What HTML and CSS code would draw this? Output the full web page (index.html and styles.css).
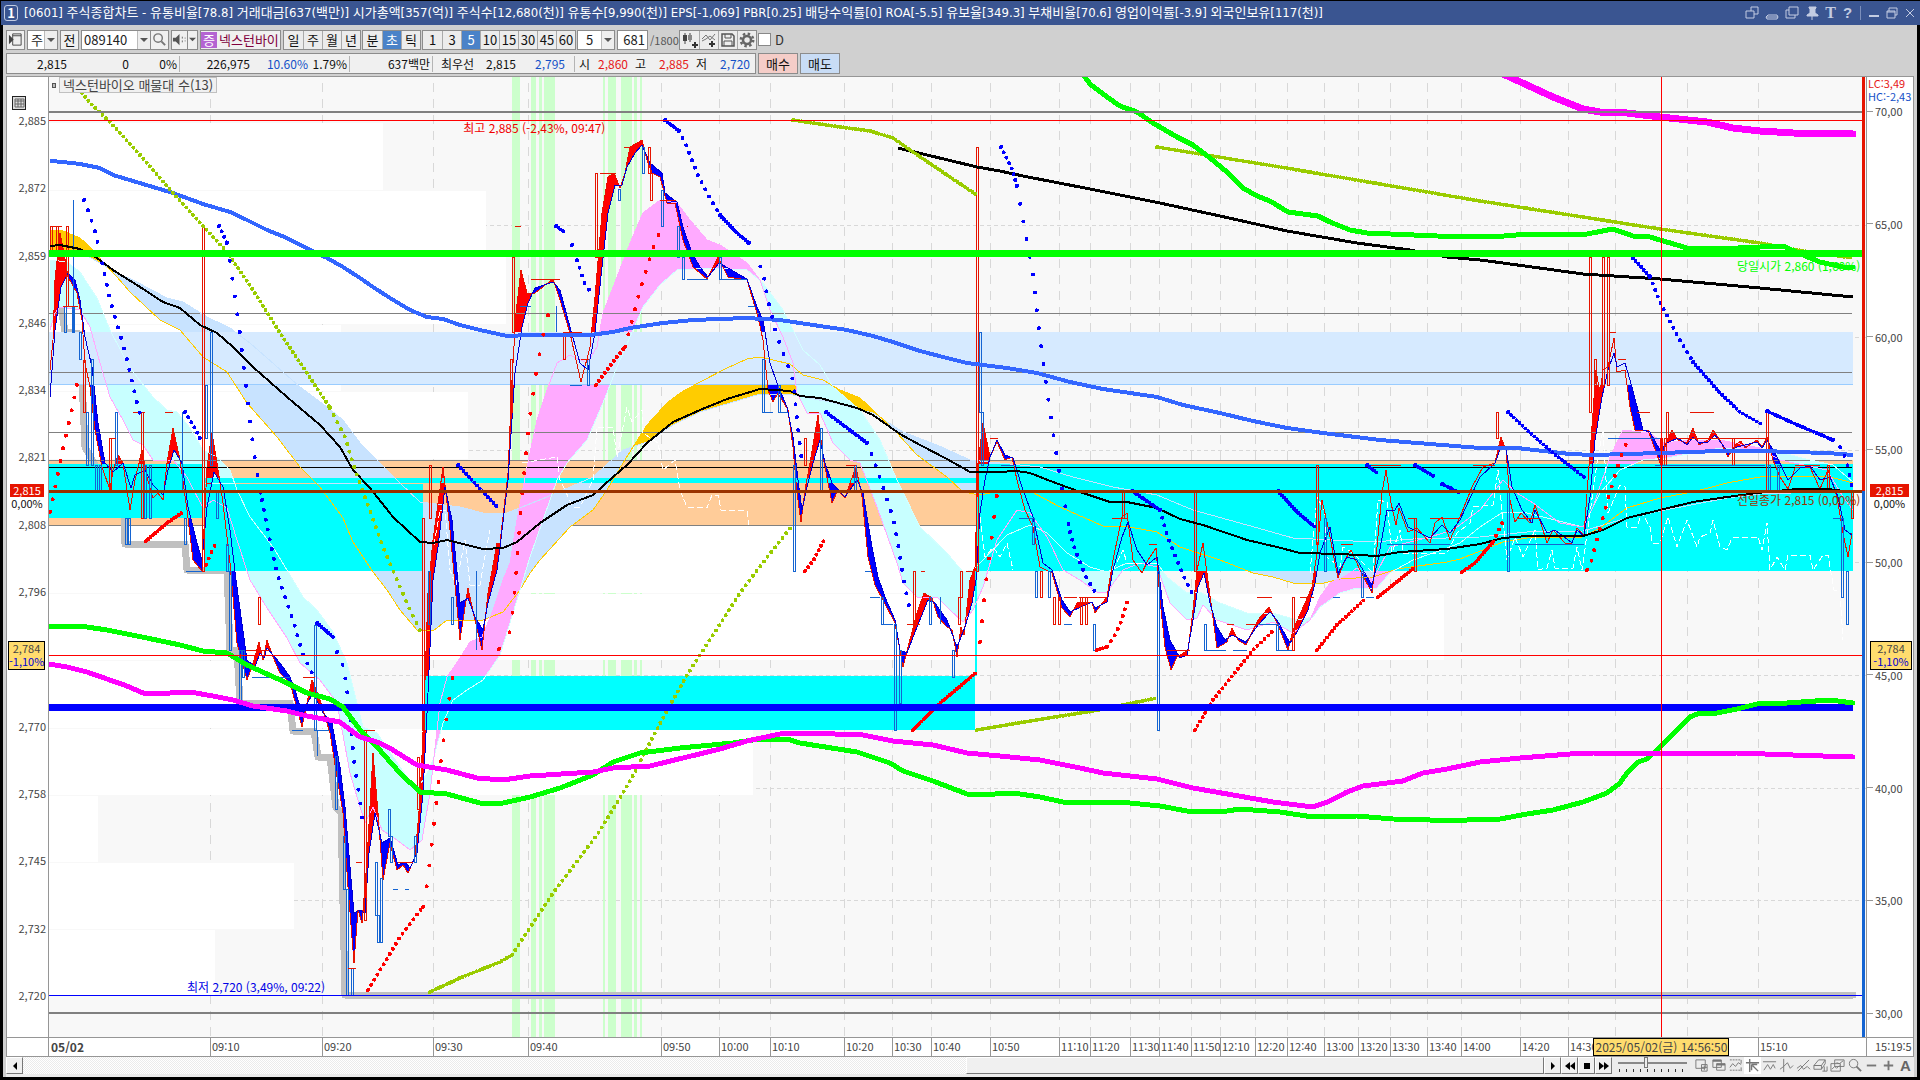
FILE: index.html
```html
<!DOCTYPE html>
<html lang="ko">
<head>
<meta charset="utf-8">
<title>[0601] 주식종합차트</title>
<link rel="stylesheet" href="styles.css">
</head>
<body>
<svg class="defs" aria-hidden="true">
  <symbol id="i-down" viewBox="0 0 8 8"><path d="M0 2h8L4 6z" fill="#555"/></symbol>
</svg>
<div class="window">
  <header class="titlebar">
    <span class="badge">1</span>
    <h1>[0601] 주식종합차트 - 유통비율[78.8] 거래대금[637(백만)] 시가총액[357(억)] 주식수[12,680(천)] 유통수[9,990(천)] EPS[-1,069] PBR[0.25] 배당수익률[0] ROA[-5.5] 유보율[349.3] 부채비율[70.6] 영업이익률[-3.9] 외국인보유[117(천)]</h1>
    <div class="win-buttons">
      <button aria-label="분리"><svg viewBox="0 0 14 14"><path d="M6 5V1h7v7H9M1 5h8v7H1z"/></svg></button>
      <button aria-label="내리기"><svg viewBox="0 0 14 14"><path d="M1 11h12M3 9h9l1 2-1 2H2l-1-2z" stroke-width="1"/></svg></button>
      <button aria-label="복제"><svg viewBox="0 0 14 14"><path d="M4 1h9v8H4zM4 4H1v8h9V9"/></svg></button>
      <button aria-label="고정"><svg viewBox="0 0 14 14"><path d="M4 1h7v1l-1 1v4l3 2v1H2V9l3-2V3L4 2z" fill="#c3cce2"/><path d="M7 9v5"/></svg></button>
      <button aria-label="글꼴" class="serif">T</button>
      <button aria-label="도움말" class="help">?</button>
      <span class="bar"></span>
      <button class="sys" aria-label="최소화"><svg viewBox="0 0 14 14"><path d="M2 10h10" stroke-width="2"/></svg></button>
      <button class="sys" aria-label="복원"><svg viewBox="0 0 14 14"><path d="M4 5V2h8v7h-2M2 5h8v7H2zM2 6h8"/></svg></button>
      <button class="sys" aria-label="닫기"><svg viewBox="0 0 14 14"><path d="M3 3l8 8M11 3l-8 8"/></svg></button>
    </div>
  </header>

  <div class="toolbar">
    <button class="tb w19" aria-label="패널"><svg viewBox="0 0 16 16"><path d="M5 2h9v12H5zM5 4h9" stroke="#444" fill="#eee"/><path d="M1 3v10l5-5z" fill="#444"/></svg></button>
    <label class="combo w31"><select aria-label="종목 구분"><option>주</option></select><span class="arrow"><svg><use href="#i-down"/></svg></span></label>
    <button class="tb w19">전</button>
    <label class="combo w70"><input type="text" value="089140" aria-label="종목코드"><span class="arrow"><svg><use href="#i-down"/></svg></span></label>
    <button class="tb w19 join" aria-label="검색"><svg viewBox="0 0 16 16"><circle cx="6.500" cy="6.500" r="4.500" fill="none" stroke="#777" stroke-width="1.500"/><path d="M10 10l4 4" stroke="#777" stroke-width="2"/></svg></button>
    <button class="tb w17" aria-label="소리"><svg viewBox="0 0 16 16"><path d="M1 6h3l4-4v12l-4-4H1z" fill="#555"/><path d="M11 5v2M11 9v2M14 6v1M14 9v1" stroke="#666"/></svg></button>
    <button class="tb w11 join" aria-label="소리 설정"><svg class="tiny"><use href="#i-down"/></svg></button>
    <div class="stock"><span>증</span>넥스턴바이</div>
    <div class="group"><button>일</button><button>주</button><button>월</button><button>년</button></div>
    <div class="group"><button>분</button><button class="on">초</button><button>틱</button></div>
    <div class="group"><button>1</button><button>3</button><button class="on">5</button><button>10</button><button>15</button><button>30</button><button>45</button><button>60</button></div>
    <label class="combo w38 center"><select aria-label="주기"><option>5</option></select><span class="arrow"><svg><use href="#i-down"/></svg></span></label>
    <label class="combo w31"><input class="right" type="text" value="681" aria-label="조회 봉수"></label>
    <span class="total">/1800</span>
    <div class="group icons">
      <button aria-label="차트 추가"><svg viewBox="0 0 16 16"><path d="M3 1v11M8 1v9" stroke="#444"/><path d="M1 3h4v6H1z" fill="#444"/><path d="M6 3h4v5H6z" fill="#888"/><path d="M13 10v6M10 13h6" stroke="#333" stroke-width="2"/></svg></button>
      <button aria-label="지표 추가"><svg viewBox="0 0 16 16"><path d="M1 7l4-4 4 5 5-6M1 9l4-2 4-3 5 4" stroke="#777" fill="none"/><path d="M11 9v6M8 12h6" stroke="#333" stroke-width="2"/></svg></button>
      <button aria-label="저장"><svg viewBox="0 0 16 16"><path d="M2 2h10l2 2v10H2z" stroke="#555" fill="#eee" stroke-width="1.500"/><path d="M5 2v4h6V2M4 14V9h8v5" stroke="#555" fill="none"/></svg></button>
      <button aria-label="설정"><svg viewBox="0 0 16 16"><circle cx="8" cy="8" r="4" fill="none" stroke="#666" stroke-width="2.500"/><circle cx="8" cy="8" r="6.200" fill="none" stroke="#666" stroke-width="2.500" stroke-dasharray="2.430 2.430"/></svg></button>
    </div>
    <label class="check"><input type="checkbox">D</label>
  </div>

  <div class="quote">
    <div class="prices">
      <span>2,815</span><span>0</span><span class="cell">0%</span>
      <span>226,975</span><span class="blue">10.60%</span><span class="cell">1.79%</span>
      <span class="cell">637백만</span>
      <span>최우선</span><span>2,815</span><span class="blue cell far">2,795</span>
      <span>시</span><span class="red">2,860</span><span>고</span><span class="red">2,885</span><span>저</span><span class="blue">2,720</span>
    </div>
    <button class="order buy">매수</button>
    <button class="order sell">매도</button>
  </div>

  <main class="chart">
    <div class="axis left">
      <svg class="sheet" viewBox="0 0 14 14"><path d="M0 0h14v14H0z" fill="#222"/><path d="M1 1h12v12H1z" fill="#ddd"/><path d="M3 3h9v8H3zM3 5h9M3 8h9M6 3v8M9 3v8" stroke="#666" fill="none"/></svg>
      <ol class="scale">
        <li>2,885</li><li>2,872</li><li>2,859</li><li>2,846</li><li>2,834</li><li>2,821</li><li>2,808</li><li>2,796</li><li>&nbsp;</li><li>2,770</li><li>2,758</li><li>2,745</li><li>2,732</li><li>2,720</li>
      </ol>
      <div class="now"><b>2,815</b><span>0,00%</span></div>
      <div class="cursor-price">2,784<span>-1,10%</span></div>
    </div>
    <div class="plot">
      <svg id="plot" viewBox="49 77 1817 960" preserveAspectRatio="none" role="img" aria-label="넥스턴바이오 가격 차트"></svg>
      <span class="series"><i></i><span>넥스턴바이오 매물대 수(13)</span></span>
      <span class="note high">최고 2,885 (-2,43%, 09:47)</span>
      <span class="note low">최저 2,720 (3,49%, 09:22)</span>
      <span class="note open">당일시가 2,860 (1,60%)</span>
      <span class="note close">전일종가 2,815 (0,00%)</span>
    </div>
    <div class="axis right-axis">
      <div class="extremes"><span class="red">LC:3,49</span><span class="blue">HC:-2,43</span></div>
      <ol class="scale">
        <li>70,00</li><li>65,00</li><li>60,00</li><li>55,00</li><li>50,00</li><li>45,00</li><li>40,00</li><li>35,00</li><li>30,00</li>
      </ol>
      <div class="now"><b>2,815</b><span>0,00%</span></div>
      <div class="cursor-price">2,784<span>-1,10%</span></div>
    </div>
    <div class="corner"></div>
    <div class="times">
      <span class="date">05/02</span><span>09:10</span><span>09:20</span><span>09:30</span><span>09:40</span><span>09:50</span><span>10:00</span><span>10:10</span><span>10:20</span><span>10:30</span><span>10:40</span><span>10:50</span><span>11:10</span><span>11:20</span><span>11:30</span><span>11:40</span><span>11:50</span><span>12:10</span><span>12:20</span><span>12:40</span><span>13:00</span><span>13:20</span><span>13:30</span><span>13:40</span><span>14:00</span><span>14:20</span><span>14:30</span><span></span><span></span><span>15:10</span>
      <div class="cursor-time">2025/05/02(금) 14:56:50</div>
    </div>
    <div class="last-time">15:19:5</div>
  </main>

  <footer class="bottom">
    <button class="sq" aria-label="왼쪽"><svg viewBox="0 0 12 12"><path d="M8 2v8L4 6z"/></svg></button>
    <div class="track"><div class="thumb"></div></div>
    <button class="sq" aria-label="오른쪽"><svg viewBox="0 0 12 12"><path d="M4 2v8l4-4z"/></svg></button>
    <button class="sq" aria-label="뒤로"><svg viewBox="0 0 12 12"><path d="M6 2v8L1 6zM11 2v8L6 6z"/></svg></button>
    <button class="sq" aria-label="정지"><svg viewBox="0 0 12 12"><path d="M3 3h6v6H3z"/></svg></button>
    <button class="sq" aria-label="앞으로"><svg viewBox="0 0 12 12"><path d="M1 2v8l5-4zM6 2v8l5-4z"/></svg></button>
    <div class="speed"><input type="range" min="0" max="10" value="4" aria-label="속도"><span class="ticks"></span></div>
    <div class="tools">
      <button aria-label="창 추가"><svg viewBox="0 0 16 16"><path d="M2 2h10v9H2zM8 7h6v7H8zM11 8v5M8 10h6"/></svg></button>
      <button aria-label="창 복제"><svg viewBox="0 0 16 16"><path d="M2 2h9v8H2zM6 6h9v7H6z" fill="#eee"/><path d="M2 3h9M6 7h9" stroke-width="2"/></svg></button>
      <button aria-label="전체"><svg viewBox="0 0 16 16"><path d="M2 2h12M2 13h12" stroke-dasharray="2 1"/><path d="M2 10l3-4 3 3 3-4 3 2M14 2v4M14 10v4"/></svg></button>
      <button aria-label="십자선" class="on"><svg viewBox="0 0 16 16"><path d="M1 5h14M5 1v14M7 7v6M7 7h6M8 8l6 6" stroke-width="1.500"/></svg></button>
      <button aria-label="수평선"><svg viewBox="0 0 16 16"><path d="M1 4h14M2 13l4-6 3 5 3-5 2 4"/></svg></button>
      <button aria-label="수직선"><svg viewBox="0 0 16 16"><path d="M5 1v14M1 12l4-3 4-4 3 6 3-3"/></svg></button>
      <button aria-label="추세선"><svg viewBox="0 0 16 16"><path d="M2 14L14 2M1 11l4-3 3 4 4-3 3 3"/></svg></button>
      <button aria-label="지우기"><svg viewBox="0 0 16 16"><path d="M1 8l5-6h7l-4 6zM1 8h8v4H1zM9 12l4-6V2M10 14h5M12 9v5M15 9v5"/></svg></button>
      <button aria-label="차트 겹침"><svg viewBox="0 0 16 16"><path d="M5 2h10v7H5zM1 6h10v8H1z" fill="#eee"/><path d="M2 12l3-3 2 2 3-3M7 5l3 1 4-3"/></svg></button>
      <button aria-label="돋보기"><svg viewBox="0 0 16 16"><circle cx="7" cy="6" r="4.500"/><path d="M10 9l5 5" stroke-width="2"/></svg></button>
      <button aria-label="축소"><svg viewBox="0 0 16 16"><path d="M3 8h10" stroke-width="2"/></svg></button>
      <button aria-label="확대"><svg viewBox="0 0 16 16"><path d="M3 8h10M8 3v10" stroke-width="2"/></svg></button>
      <button aria-label="자동" class="auto">A</button>
    </div>
  </footer>
</div>
<script src="chart.js"></script>
</body>
</html>
```
FILE: styles.css
```css
* { box-sizing: border-box; }
body {
  margin: 0;
  background: #000;
  color: #222;
  font: 13px/16px "Noto Sans CJK KR", sans-serif;
}
button, input, select { font: inherit; color: inherit; margin: 0; padding: 0; border: 0; background: none; border-radius: 0; }
h1, ol { margin: 0; padding: 0; list-style: none; font: inherit; }
svg { display: block; }
.defs { display: none; }
.red { color: #e61919; }
.blue { color: #1450c8; }

.window {
  min-height: 100vh;
  display: grid;
  grid-template-rows: auto auto auto 1fr auto;
  background: #d0d0d0;
  border: solid #000;
  border-width: 1px 3px 3px 3px;
}

.titlebar {
  display: flex;
  align-items: center;
  gap: 6px;
  height: 24px;
  margin: 0 -3px 0 -2px;
  padding: 0 1px 0 3px;
  background: #3a5591;
  color: #fff;
}
.titlebar h1 { flex: 1; min-width: 0; white-space: nowrap; font-family: "DejaVu Sans Condensed", "Noto Sans CJK KR", sans-serif; }
.badge {
  width: 14px; height: 16px; line-height: 14px;
  border: 1px solid #c3cce2; border-radius: 3px;
  text-align: center; font-weight: bold;
}
.win-buttons { display: flex; align-items: center; }
.win-buttons button { width: 20px; height: 20px; display: grid; place-items: center; color: #c3cce2; }
.win-buttons svg { width: 14px; height: 14px; fill: none; stroke: #c3cce2; }
.win-buttons .serif { font: bold 16px/20px "Liberation Serif", serif; width: 17px; }
.win-buttons .help { font: bold 15px/20px "Liberation Sans", sans-serif; width: 17px; }
.win-buttons .sys { width: 18px; }
.win-buttons .bar { width: 1px; height: 14px; background: #7c8fbb; margin: 0 4px; }

.toolbar { display: flex; align-items: center; height: 27px; padding: 4px 4px 2px 3px; }
.toolbar > * { flex: none; }
.tb, .combo, .group, .stock { height: 20px; border: 1px solid #8c8c8c; background: #f0f0f0; margin-right: 2px; }
.tb { display: grid; place-items: center; color: #111; }
.tb svg { width: 15px; height: 15px; }
.join { margin-left: -3px; }
.w11 { width: 11px; }
.w17 { width: 17px; }
.w19 { width: 19px; }
.w31 { width: 31px; }
.w38 { width: 38px; }
.w70 { width: 70px; }
.combo { display: flex; background: #fff; }
.combo input, .combo select { flex: 1; min-width: 0; padding-left: 2px; appearance: none; outline: 0; color: #222; }
.combo select { padding-left: 3px; }
.combo .right { text-align: right; padding-right: 2px; }
.center select { padding-left: 8px; }
.arrow { width: 13px; border-left: 1px solid #bbb; background: #eee; display: grid; place-items: center; }
.arrow svg { width: 8px; height: 8px; }
.tb .tiny { width: 7px; height: 7px; }
.stock { width: 81px; display: flex; align-items: center; gap: 2px; color: #80003c; white-space: nowrap; }
.stock span { width: 16px; height: 16px; line-height: 16px; background: #b464d2; color: #fff; text-align: center; flex: none; }
.group { display: flex; background: #ececec; color: #111; margin-right: 1px; }
.group button { width: 19px; border-left: 1px solid #aaa; display: grid; place-items: center; }
.group button:first-child { border-left: 0; }
.group .on { background: #4a82c8; color: #fff; }
.icons svg { width: 16px; height: 16px; }
.total { width: 29px; font-size: 11px; color: #555; }
.check { display: flex; align-items: center; gap: 4px; color: #333; }
.check input { appearance: none; width: 13px; height: 13px; background: #fff; border: 1px solid #888; }

.quote { display: flex; gap: 2px; height: 24px; padding: 1px 3px 2px; }
.prices {
  display: grid;
  grid-template-columns: 60px 62px 51px 70px 58px 42px 83px 41px 42px 59px 15px 38px 18px 43px 18px 43px;
  width: 750px;
  border: 1px solid #8c8c8c;
  background: #f0f0f0;
  color: #111;
  text-align: right;
  align-items: center;
  font-size: 12px;
}
.prices .cell { border-right: 1px solid #b4b4b4; padding-right: 2px; }
.prices .far { padding-right: 9px; }
.prices .red { color: #e61919; }
.prices .blue { color: #1450c8; }
.order { width: 40px; border: 1px solid #8c8c8c; color: #111; }
.buy { background: #f5cdc8; }
.sell { background: #c8dcf5; }

.chart {
  display: grid;
  grid-template-columns: 42px 1fr 47px;
  grid-template-rows: 1fr 20px;
  margin: 0 3px 0 3px;
  border: solid #969696;
  border-width: 1px 1px 0 1px;
  background: #fff;
}
.axis { position: relative; color: #444; background: #fff; font-size: 11px; }
.left { border-right: 1px solid #969696; }
.right-axis { border-left: 1px solid #969696; }
.scale { position: absolute; left: 0; right: 2px; top: 35px; bottom: 34px; display: flex; flex-direction: column; justify-content: space-between; text-align: right; line-height: 16px; }
.right-axis .scale { top: 26px; bottom: 16px; left: 0; text-align: left; }
.right-axis li { display: flex; align-items: center; }
.right-axis li::before { content: ""; width: 6px; height: 1px; background: #969696; margin-right: 2px; }
.sheet { position: absolute; left: 5px; top: 19px; width: 14px; height: 14px; }
.now { position: absolute; top: 42.400%; left: 3px; right: 4px; text-align: center; line-height: 13px; color: #111; }
.now b { display: block; font-weight: normal; background: #e61400; color: #fff; height: 13px; }
.cursor-price {
  position: absolute; top: 58.750%; left: 1px; right: 3px; height: 29px;
  border: 1px solid #000; background: #ffdc6e; text-align: center; line-height: 13px; color: #444;
}
.cursor-price span { display: block; color: #0000d2; }
.right-axis .cursor-price { left: 3px; right: 1px; }
.extremes { position: absolute; top: 0; left: 1px; line-height: 13px; white-space: nowrap; display: grid; }

.plot { position: relative; overflow: hidden; background: #f8f8f8; min-height: 400px; }
.plot svg { position: absolute; width: 100%; height: 100%; shape-rendering: crispEdges; }
.series { position: absolute; left: 3px; top: 0; display: flex; align-items: center; gap: 3px; color: #444; white-space: nowrap; }
.series i { width: 4px; height: 5px; border: 1px solid #555; background: #bbb; }
.series span { background: #f0f0f0; border: 1px solid #c0c0c0; padding: 0 3px; line-height: 14px; }
.note { position: absolute; white-space: nowrap; line-height: 14px; font-size: 12px; }
.high { left: 22.800%; top: 4.600%; color: #f00000; }
.low { left: 7.600%; top: 94.100%; color: #0000e6; }
.open { left: 92.900%; top: 19%; color: #00ff00; }
.close { left: 92.900%; top: 43.300%; color: #993300; }

.corner { border-top: 1px solid #969696; border-right: 1px solid #969696; border-bottom: 1px solid #969696; }
.times {
  position: relative;
  display: grid;
  min-width: 0;
  grid-template-columns: 161fr 112fr 111fr 95fr 133fr 58fr 51fr 74fr 48fr 39fr 59fr 69fr 31fr 40fr 29fr 32fr 29fr 35fr 32fr 37fr 34fr 32fr 37fr 34fr 59fr 48fr 47fr 72fr 71fr 108fr;
  border: solid #969696;
  border-width: 1px 0;
  color: #444;
  font-size: 11px;
}
.times > span { min-width: 0; white-space: nowrap; border-left: 1px solid #969696; padding-left: 1px; line-height: 17px; }
.times .date { border: 0; font-size: 12px; font-weight: bold; padding-left: 2px; }
.cursor-time { position: absolute; left: 85%; top: 0; width: 136px; height: 18px; line-height: 15px; font-size: 12px; border: 1px solid #000; background: #ffdc6e; text-align: center; white-space: nowrap; }
.last-time { border: solid #969696; border-width: 1px 0 1px 1px; padding-left: 8px; white-space: nowrap; line-height: 17px; font-size: 11px; color: #444; }

.bottom { display: flex; height: 20px; margin: 0 3px; padding-bottom: 3px; background: #ececec; }
.sq { width: 17px; height: 17px; flex: none; display: grid; place-items: center; background: #f0f0f0; border: 1px solid; border-color: #fff #777 #777 #fff; }
.sq svg { width: 12px; height: 12px; }
.track { flex: 1; display: flex; justify-content: flex-end; background: repeating-conic-gradient(#fff 0 25%, #ebebeb 0 50%) 0 0 / 2px 2px; }
.thumb { width: 38%; background: #f0f0f0; border: 1px solid; border-color: #fff #777 #777 #fff; }
.speed { width: 81px; padding: 0 6px; }
.speed input { display: block; width: 100%; height: 11px; appearance: none; background: linear-gradient(#888, #888) center / 100% 2px no-repeat; }
.speed input::-webkit-slider-thumb { appearance: none; width: 4px; height: 11px; background: #eee; border: 1px solid #777; }
.ticks { display: block; height: 3px; margin: 1px 1px 0; background: repeating-linear-gradient(90deg, #333 0 1px, transparent 1px 7px); }
.tools { display: flex; width: 221px; justify-content: space-between; }
.tools button { width: 17px; height: 17px; display: grid; place-items: center; }
.tools .on { background: #fff; }
.tools svg { width: 15px; height: 15px; fill: none; stroke: #777; }
.tools .auto { font: bold 15px/16px "Liberation Sans", sans-serif; color: #666; }
```
FILE: chart.js
```js
const svg = document.getElementById('plot');
const NS = 'http://www.w3.org/2000/svg';
const LEFT = 49, RIGHT = 1866, TOP = 77, BOTTOM = 1037, END = 1853;

function add(tag, attrs, parent = svg) {
  const el = document.createElementNS(NS, tag);
  for (const key in attrs) el.setAttribute(key, attrs[key]);
  parent.appendChild(el);
  return el;
}
const box = (x1, y1, x2, y2, fill) => add('rect', { x: x1, y: y1, width: x2 - x1, height: y2 - y1, fill });
const line = (points, stroke, width = 1, extra = {}) =>
  add('polyline', { points, stroke, 'stroke-width': width, fill: 'none', 'stroke-linejoin': 'round', ...extra });
const dots = (points, stroke, gap) => line(points, stroke, 4, { 'stroke-linecap': 'round', 'stroke-dasharray': '0 ' + gap });

// Fills the area between two lines, coloured by which of them is on top.
let clips = 0;
function ribbon(a, b, aboveFill, belowFill) {
  const close = (points, y) => {
    const xs = points.trim().split(/\s+/);
    return points + ' ' + xs[xs.length - 1].split(',')[0] + ',' + y + ' ' + xs[0].split(',')[0] + ',' + y;
  };
  [[a, b, aboveFill], [b, a, belowFill]].forEach(([upper, lower, fill]) => {
    const id = 'clip' + clips++;
    add('polygon', { points: close(lower, 0) }, add('clipPath', { id }));
    add('polygon', { points: close(upper, 1100), fill, 'clip-path': 'url(#' + id + ')' });
  });
}

const fast = '50,370 53,340 55,280 60,233 64,253 68,277 77,293 82,320 85,363 90,387 95,430 102,467 110,490 113,470 118,455 123,463 130,510 135,480 142,450 147,477 153,498 158,493 163,500 167,463 173,428 180,460 187,510 193,560 202,571 207,467 212,433 217,463 223,503 230,563 237,643 247,680 252,667 259,642 263,660 267,640 273,657 280,673 290,683 302,727 307,703 312,680 320,700 330,733 337,777 343,813 348,887 354,963 358,910 362,923 367,860 373,753 378,813 383,880 390,843 397,870 403,865 408,873 415,857 420,800 424,710 428,593 433,540 443,467 450,530 460,640 468,588 475,620 482,650 488,593 497,543 500,543 508,473 512,380 516,313 521,270 527,293 535,293 553,279 560,300 570,333 581,382 590,347 595,297 602,213 608,177 614,173 620,188 625,173 630,147 637,143 642,140 647,160 652,173 660,177 667,203 675,203 683,240 693,267 707,279 718,257 728,277 747,280 758,317 763,340 768,390 773,402 778,393 788,410 793,447 797,493 801,522 805,490 810,463 818,415 823,457 832,503 838,490 845,498 850,483 856,467 862,497 868,557 875,585 883,600 895,623 903,667 908,647 917,613 924,593 932,598 938,617 947,627 952,630 957,657 961,627 964,635 970,580 975,567 978,463 983,423 990,457 997,442 1005,460 1012,457 1017,480 1025,510 1033,527 1040,567 1052,573 1062,608 1070,617 1077,603 1092,602 1095,613 1107,597 1113,560 1122,517 1127,513 1133,560 1142,573 1148,560 1156,548 1160,600 1165,647 1171,670 1177,657 1188,650 1193,610 1197,570 1203,543 1207,573 1217,648 1227,642 1232,628 1238,640 1246,645 1258,620 1269,607 1277,623 1288,650 1293,630 1305,603 1312,587 1317,553 1322,500 1328,527 1338,578 1345,560 1351,550 1360,570 1372,593 1377,547 1382,493 1386,470 1391,503 1396,525 1399,508 1408,532 1417,528 1430,543 1435,523 1442,517 1450,540 1460,517 1472,487 1483,467 1495,463 1501,437 1506,450 1510,500 1515,522 1521,513 1530,523 1535,505 1547,543 1553,530 1565,543 1572,543 1577,528 1584,535 1588,480 1593,413 1596,370 1600,393 1603,370 1608,367 1614,338 1617,372 1625,370 1630,407 1635,430 1648,430 1660,463 1667,440 1672,430 1678,440 1687,443 1693,428 1699,445 1708,440 1713,430 1720,440 1728,457 1735,445 1741,441 1745,448 1757,440 1762,447 1767,437 1773,460 1780,477 1788,489 1795,468 1810,467 1820,489 1828,470 1837,497 1843,533 1848,557 1852,533';
const slow = '50,397 55,330 61,287 68,273 75,280 80,300 85,337 92,367 98,423 105,463 113,472 123,463 131,488 135,475 145,470 153,485 163,495 168,470 174,450 182,463 188,507 197,543 202,560 207,507 214,472 223,487 230,530 236,580 247,660 255,667 260,653 264,658 267,648 280,663 290,677 295,690 302,713 313,693 323,713 332,723 340,767 345,807 350,867 354,913 360,910 365,913 369,853 375,813 382,843 390,838 398,865 405,862 410,868 417,853 423,793 428,693 433,580 438,547 445,487 452,520 460,603 468,598 475,617 483,630 488,603 497,570 500,547 508,480 515,373 522,327 528,303 535,288 553,282 560,290 570,327 580,363 588,370 595,333 602,267 608,213 615,185 622,185 627,167 635,153 642,145 650,163 662,173 665,193 677,202 683,227 692,253 700,267 708,277 719,263 728,268 747,279 757,307 763,320 770,363 777,383 787,407 793,437 798,480 802,510 807,487 813,463 820,440 825,463 832,483 845,497 857,480 863,493 872,547 878,577 885,597 895,620 900,650 907,653 917,627 928,600 935,603 947,620 957,647 965,627 972,603 976,580 980,513 985,480 990,457 997,440 1005,455 1013,458 1022,487 1033,517 1043,563 1052,570 1062,600 1070,612 1092,602 1095,608 1107,602 1113,570 1122,537 1128,522 1137,550 1147,565 1157,557 1163,607 1170,640 1180,658 1187,655 1193,620 1198,587 1204,573 1210,603 1217,627 1225,640 1232,635 1246,642 1258,625 1270,612 1277,620 1290,643 1297,632 1308,610 1315,583 1320,553 1330,527 1338,573 1347,557 1357,560 1372,585 1378,560 1387,510 1395,510 1399,503 1408,527 1430,538 1442,525 1450,533 1460,520 1477,483 1480,477 1495,463 1501,447 1506,448 1512,487 1522,510 1532,523 1535,510 1547,533 1555,530 1572,543 1577,530 1584,536 1590,497 1595,440 1602,397 1608,370 1614,353 1617,367 1625,363 1632,387 1643,430 1650,432 1660,450 1667,443 1678,438 1687,445 1693,437 1699,443 1708,442 1715,435 1728,452 1737,447 1757,442 1762,448 1767,440 1775,453 1788,480 1800,468 1810,466 1820,480 1830,477 1838,497 1845,530 1852,535';
const cyanEdge = '50,260 67,262 80,272 97,298 110,330 130,368 153,397 167,410 177,412 190,428 203,450 217,457 230,470 237,490 250,517 273,547 293,580 303,597 317,610 333,632 347,663 357,703 363,727 377,733 400,767 417,790 427,773 433,760 443,723 453,700 467,690 483,680 500,655 513,613 530,557 543,520 557,480 567,463 587,440 603,403 617,367 630,337 643,307 660,285 677,270 713,268 747,270 763,283 783,310 803,350 820,365 833,387 860,410 880,440 897,480 920,527 947,553 963,572 973,570 980,563 1007,535 1030,525 1047,533 1067,553 1090,567 1107,572 1127,563 1157,563 1167,577 1187,593 1200,592 1220,603 1247,613 1273,613 1297,620 1313,617 1320,607 1340,593 1357,588 1377,588 1390,573 1413,560 1447,548 1460,543 1480,527 1503,512 1527,513 1583,527 1600,493 1620,470 1643,460 1667,458 1693,453 1720,448 1760,450 1783,453 1810,460 1833,465 1853,482';
const pinkEdge = '50,330 55,313 60,307 80,310 90,327 100,363 110,397 123,420 133,440 143,445 153,460 173,460 187,477 203,508 213,500 227,508 237,540 250,580 267,608 287,638 300,663 320,680 337,703 350,773 360,807 365,823 373,807 382,830 397,840 410,850 422,840 430,793 440,703 447,677 460,658 470,642 482,637 493,610 503,580 510,563 517,520 527,467 537,420 547,390 557,363 570,355 587,363 597,347 603,313 617,277 630,243 643,213 660,200 677,203 690,220 707,240 720,245 747,263 760,280 770,310 783,337 793,363 797,393 807,413 820,413 833,443 850,460 860,463 877,507 897,563 903,583 917,597 937,597 950,610 963,622 973,610 983,587 997,540 1017,510 1030,513 1047,537 1063,570 1080,580 1097,592 1107,592 1123,570 1140,563 1157,567 1170,603 1187,620 1197,618 1203,605 1217,620 1247,630 1273,622 1293,633 1310,620 1320,597 1330,583 1347,575 1357,568 1373,580 1390,547 1430,537 1453,530 1480,510 1503,480 1517,493 1533,503 1560,523 1583,527 1593,507 1610,457 1623,430 1650,433 1663,443 1693,440 1720,440 1760,448 1780,460 1827,470 1843,497 1853,510';
const goldEdge = '50,230 63,231 80,238 90,247 103,262 117,277 130,292 160,320 180,330 203,357 227,372 247,403 277,437 300,467 320,487 343,518 353,542 373,572 387,590 400,610 417,630 433,631 447,620 483,620 503,612 520,590 530,573 540,560 570,527 593,510 607,490 623,463 633,447 647,425 667,403 680,393 700,382 727,368 747,359 760,357 790,364 803,375 823,380 840,390 860,398 873,410 897,433 917,455 947,477 963,492 980,495 1000,491 1030,491 1060,507 1103,526 1130,527 1157,532 1180,547 1220,560 1253,573 1273,577 1293,583 1320,584 1340,579 1373,577 1397,569 1447,562 1460,559 1503,542 1527,538 1583,537 1600,528 1627,508 1660,498 1693,492 1727,483 1760,477 1827,476 1853,483';
const skyEdge = '50,250 80,252 100,263 113,271 133,280 167,298 183,302 207,317 230,328 250,343 300,387 327,407 343,420 360,443 377,460 400,483 420,502 460,507 483,513 507,513 547,497 593,477 623,450 647,442 673,425 700,412 760,394 793,395 830,402 873,413 903,432 937,445 970,460 1000,463 1040,467 1073,477 1113,487 1157,495 1193,510 1247,525 1293,538 1373,542 1413,539 1480,537 1527,532 1583,531 1627,518 1660,511 1727,498 1760,494 1853,491';

// Grid
[210, 322, 433, 528, 661, 719, 770, 844, 892, 931, 990, 1059, 1090, 1130, 1159, 1191, 1220, 1255, 1287, 1324, 1358, 1390, 1427, 1461, 1520, 1568, 1615, 1687, 1758]
  .forEach(x => line(`${x + .5},${TOP + 6} ${x + .5},${BOTTOM}`, '#d8d8d8', 1, { 'stroke-dasharray': '9 7' }));
[225, 337, 450, 562, 675, 788, 900]
  .forEach(y => line(`${LEFT},${y + .5} ${RIGHT},${y + .5}`, '#d8d8d8', 1, { 'stroke-dasharray': '4 3' }));
[[512, 520], [531, 536], [539, 542], [544, 555], [603, 605], [608, 616], [621, 632], [634, 637], [640, 642]]
  .forEach(([a, b]) => box(a, TOP, b, BOTTOM, '#ccffcc'));

// Volume-by-price bars
[[123, 190, 383], [191, 256, 486], [257, 324, 506], [325, 391, 341], [392, 459, 468], [526, 593, 977], [594, 660, 1444], [661, 728, 348], [729, 795, 753], [796, 862, 98], [863, 929, 294], [930, 995, 215]]
  .forEach(([y1, y2, x]) => box(LEFT, y1, x, y2, '#fff'));
box(LEFT, 460, 977, 525, '#ffcc99');
box(977, 460, END, 464, '#ffcc99');
line(`${LEFT},525.5 977,525.5`, '#808080');

// Trend fills
line('60,260 62,313 65,332 80,334 85,447 95,465 100,492 123,492 125,544 185,544 187,570 227,570 230,650 237,650 240,703 290,703 293,731 314,731 318,757 330,757 336,808 341,812 345,995 1853,995', '#c0c0c0', 7, { 'stroke-linecap': 'round' });
ribbon(goldEdge, skyEdge, '#ffcc00', '#c8e3ff');
ribbon(pinkEdge, cyanEdge, '#ffaaff', '#c8ffff');
ribbon(fast, slow, '#ff0000', '#0000ff');

// Support and resistance zones
box(LEFT, 332, END, 384, '#d6eaff');
line(`${LEFT},384.5 ${END},384.5`, '#99ccff');
box(LEFT, 464, 203, 518, '#00ffff');
box(205, 478, 977, 483, '#00ffff');
box(205, 484, 423, 571, '#00ffff');
box(425, 676, 975, 730, '#00ffff');
box(975, 571, 977, 676, '#00ffff');
box(977, 464, END, 571, '#00ffff');
[313, 372, 432, 460].forEach(y => line(`${LEFT},${y + .5} 1852,${y + .5}`, '#808080'));
line(`${LEFT},467.5 1852,467.5`, '#000');

// Moving averages
line(skyEdge, '#c8e3ff');
line(goldEdge, '#ffcc00');
line(cyanEdge, '#d2ffff');
line(pinkEdge, '#ffaaff');
const whiteDash = { 'stroke-dasharray': '6 3' };
line('522,463 557,457 560,480 573,507 580,507 593,480 597,427 613,427 617,457 627,407 632,422 642,410 643,433 658,443 663,470 675,460 680,490 687,507 707,508 712,495 718,495 721,510 747,511 749,525', '#fff', 1, whiteDash);
line('434,545 440,510 445,510 450,570 456,585 465,540 470,585 480,585 486,550 490,530', '#fff', 1, whiteDash);
line('980,517 985,557 993,547 1000,557 1007,543 1013,570', '#fff', 1, whiteDash);
line('1113,570 1123,550 1127,563 1157,563', '#fff', 1, whiteDash);
line('1310,573 1317,497 1324,510 1327,557 1340,567 1343,547 1353,553 1373,573 1378,500 1387,502 1392,553 1400,530 1403,553 1447,553 1457,533 1470,523 1473,507 1493,505 1498,470 1507,560 1515,537 1523,557 1535,530 1538,570 1547,568 1552,550 1555,568 1573,568 1577,547 1582,570 1597,463 1603,430 1608,513 1620,485 1625,487 1627,527 1637,527 1642,513 1650,527 1652,543 1660,543 1668,517 1677,547 1687,520 1697,547 1700,537 1710,533 1713,520 1720,547 1727,550 1732,538 1758,537 1762,550 1767,523 1770,570 1777,557 1785,570 1788,555 1810,555 1813,570 1823,555 1828,555 1834,590 1840,592 1843,640', '#fff', 1, whiteDash);
line(fast, '#e61400');
line(slow, '#0000d2');

// Candles: x, top, bottom
const candles = (list, color) => list.forEach(([x, y1, y2]) =>
  add('rect', { x: x - .5, y: y1 + .5, width: 2, height: y2 - y1, fill: 'none', stroke: color }));
candles([[51, 226, 250], [57, 226, 250], [67, 226, 306], [84, 360, 412], [110, 438, 490], [142, 412, 518], [203, 226, 571], [430, 465, 518], [423, 518, 730], [259, 597, 624], [365, 730, 920], [418, 757, 809], [513, 257, 332], [511, 359, 412], [564, 332, 359], [596, 173, 257], [649, 147, 173], [651, 173, 200], [805, 438, 465], [977, 147, 571], [961, 571, 597], [914, 571, 624], [959, 597, 624], [1123, 491, 518], [1195, 491, 571], [1317, 465, 544], [1415, 518, 571], [1041, 571, 597], [1054, 597, 624], [1059, 597, 624], [1081, 597, 624], [1086, 597, 624], [1293, 597, 650], [1497, 412, 438], [1590, 257, 412], [1595, 359, 385], [1603, 257, 385], [1608, 257, 385], [1661, 438, 465], [1665, 438, 465], [1667, 412, 438], [1733, 438, 465], [1767, 411, 491], [1828, 465, 491], [1852, 491, 518]], '#e61400');
candles([[65, 306, 332], [73, 306, 332], [80, 332, 359], [87, 412, 465], [92, 359, 465], [96, 465, 490], [100, 465, 490], [116, 412, 465], [145, 465, 518], [150, 465, 518], [126, 518, 544], [129, 518, 544], [206, 385, 438], [211, 332, 465], [217, 490, 518], [185, 518, 544], [227, 544, 571], [230, 571, 650], [240, 650, 703], [243, 650, 677], [315, 625, 730], [336, 756, 809], [344, 836, 889], [347, 889, 995], [352, 968, 995], [376, 862, 915], [378, 915, 942], [381, 878, 942], [389, 809, 836], [391, 836, 862], [415, 836, 862], [429, 571, 624], [452, 597, 624], [588, 359, 385], [619, 189, 200], [643, 147, 173], [662, 190, 226], [678, 226, 257], [683, 257, 279], [720, 257, 279], [763, 359, 412], [779, 385, 412], [794, 465, 571], [821, 428, 490], [855, 465, 490], [882, 597, 624], [895, 624, 730], [900, 650, 703], [930, 597, 624], [953, 650, 677], [980, 332, 412], [982, 412, 465], [1033, 518, 544], [1036, 571, 597], [1049, 571, 597], [1094, 624, 650], [1158, 571, 730], [1205, 624, 650], [1277, 624, 650], [1325, 518, 571], [1362, 571, 597], [1508, 492, 571], [1842, 518, 597], [1847, 571, 624], [1769, 465, 490], [1778, 465, 490]], '#1464d2');
[[73, 200, 332], [182, 412, 490], [317, 730, 756], [476, 571, 650], [556, 306, 332], [940, 597, 624]]
  .forEach(([x, y1, y2]) => line(`${x + .5},${y1} ${x + .5},${y2}`, '#1464d2'));
const ticks = (list, color) => list.forEach(([x1, x2, y]) => line(`${x1},${y + .5} ${x2},${y + .5}`, color));
ticks([[51, 62, 226], [63, 78, 306], [109, 116, 438], [133, 145, 412], [165, 173, 412], [246, 269, 650], [303, 315, 677], [364, 375, 730], [356, 362, 862], [348, 356, 968], [398, 413, 862], [515, 521, 226], [531, 560, 279], [566, 582, 332], [581, 589, 359], [600, 616, 173], [624, 632, 147], [660, 676, 200], [687, 688, 226], [809, 819, 412], [846, 856, 465], [921, 925, 571], [966, 974, 571], [907, 920, 624], [990, 998, 438], [1064, 1077, 597], [1079, 1107, 597], [1112, 1128, 518], [1149, 1157, 544], [1167, 1190, 650], [1227, 1234, 624], [1246, 1266, 624], [1257, 1272, 597], [1300, 1314, 597], [1341, 1353, 544], [1368, 1401, 465], [1408, 1417, 518], [1430, 1460, 518], [1473, 1495, 465], [1518, 1540, 518], [1610, 1616, 332], [1618, 1626, 359], [1637, 1650, 412], [1690, 1714, 412], [1678, 1766, 438], [1795, 1820, 465]], '#e61400');
ticks([[186, 202, 571], [252, 290, 677], [292, 303, 730], [318, 329, 730], [393, 398, 889], [405, 409, 889], [570, 582, 385], [520, 531, 306], [687, 708, 279], [722, 747, 279], [748, 755, 306], [765, 773, 412], [780, 788, 412], [865, 871, 571], [870, 880, 597], [884, 893, 624], [1001, 1014, 465], [1019, 1035, 518], [1064, 1072, 624], [1207, 1226, 650], [1233, 1247, 650], [1279, 1292, 650], [1258, 1277, 624], [1333, 1340, 597], [1366, 1374, 597], [1387, 1450, 544], [1515, 1584, 544], [1608, 1660, 438], [1655, 1765, 465], [1833, 1842, 518]], '#1464d2');

line('50,161 63,162 80,164 100,168 113,175 143,184 173,193 203,204 230,212 247,220 267,230 287,238 310,250 327,258 343,267 360,278 373,287 390,298 410,310 427,317 443,319 460,325 480,330 507,336 530,335 590,335 613,332 630,328 663,323 693,320 747,318 780,320 813,325 847,330 873,336 893,342 920,351 947,358 967,363 1007,368 1037,373 1070,382 1103,389 1130,393 1157,397 1183,405 1220,413 1253,421 1287,428 1323,433 1380,440 1430,444 1480,448 1517,448 1570,454 1593,455 1660,453 1720,451 1760,451 1827,453 1853,455', '#3366ff', 4);
line('50,246 60,245 80,249 97,258 113,270 140,287 163,302 180,308 200,325 217,333 233,347 253,367 287,397 320,425 340,447 353,470 370,488 393,517 420,542 433,543 447,540 483,549 503,548 517,542 540,523 567,505 593,495 613,477 627,465 647,443 673,422 700,410 727,399 760,389 790,391 800,396 820,398 857,408 873,415 900,434 920,445 947,459 970,472 997,472 1017,471 1030,473 1053,482 1083,493 1110,502 1127,502 1157,508 1180,519 1203,525 1247,540 1277,547 1300,553 1340,554 1377,556 1400,552 1447,549 1480,544 1503,538 1527,536 1583,536 1603,530 1627,518 1660,510 1693,502 1727,497 1757,493 1797,489 1823,489 1840,490', '#000', 2);
line('898,148 977,167 1000,171 1023,176 1090,189 1160,203 1220,216 1287,231 1357,243 1410,250 1447,257 1480,260 1503,263 1583,274 1660,279 1760,288 1853,297', '#000', 3);

// Stop-and-reverse dots
const olive = '#99cc00', red = '#ff0000', blue = '#0000ff';
dots('70,77 90,103 110,122 140,155 173,193 203,226 227,252 253,290 280,333 307,373 330,408', olive, 5);
dots('330,408 345,437 355,470 365,497 383,547 397,580 410,610 422,634', olive, 8);
dots('430,992 460,978 500,962 512,955', olive, 3);
dots('512,955 523,938 553,893 597,835 623,793 635,772 647,748 663,718 687,675 713,635 740,593 765,560 792,526', olive, 6);
['793,120 840,127 870,131 893,138 913,152 947,175 977,195', '977,730 1030,721 1093,711 1157,698', '1157,147 1280,167 1480,201 1660,229 1760,243 1803,251 1853,258'].forEach(p => dots(p, olive, 3));
[['84,200 89,213 95,231 103,267 110,300 126,355 137,403 140,414', 11], ['219,226 227,243', 6], ['227,243 232,276 240,334 251,429 256,467 262,500', 18], ['262,500 270,541 277,573 283,591 293,620 303,655 312,673', 10], ['185,412 193,425 201,440', 6], ['317,623 333,637', 3], ['337,652 344,668 346,684 350,713 354,761 360,801 362,818', 14], ['458,465 470,478 498,508', 4], ['556,226 564,232', 3], ['572,245 577,260 584,282 593,296', 8], ['665,120 679,131', 3], ['679,131 686,145 697,173 707,193 720,215', 8], ['720,215 737,233 749,243', 3], ['749,243 757,260 763,272 768,300 776,333 785,358 792,376 794,389 797,419 802,464', 13], ['826,412 847,428 867,443', 3], ['867,443 874,460 879,475 885,493 893,518 898,544 903,576 908,602 911,614', 12], ['1001,147 1012,169 1017,186', 6], ['1017,186 1025,231 1033,275 1038,321 1044,369 1052,425 1060,477 1070,532', 18], ['1070,532 1075,550 1086,577 1095,592', 8], ['1132,491 1160,510', 3], ['1160,510 1168,538 1184,577 1192,593', 8], ['1278,491 1297,512 1315,527', 3], ['1367,465 1377,473', 3], ['1415,465 1435,477', 3], ['1442,484 1460,493', 3], ['1508,412 1527,430 1553,453 1584,477', 4], ['1633,258 1650,277', 4], ['1650,277 1660,302 1677,335 1693,362', 7], ['1693,362 1720,393 1740,412 1763,425', 4], ['1767,411 1793,423 1833,440', 3], ['1833,440 1842,449 1847,463 1852,487', 10]]
  .forEach(([p, gap]) => dots(p, blue, gap));
[['50,512 55,488 63,448 71,414 76,389 79,375', 13], ['146,541 167,523 183,512', 3], ['206,565 211,553 217,541', 7], ['368,990 382,967 400,937 418,913 423,907', 6], ['423,907 426,893 431,851 437,797 442,751 450,694 455,662', 21], ['499,649 508,638 511,627 513,608 516,576 521,505 529,424 537,367 545,326 553,297', 20], ['596,385 613,362 625,347', 5], ['625,347 633,317 641,287 649,261 654,246 662,227', 13], ['805,571 813,561 824,540', 5], ['913,730 940,703 977,672', 3], ['980,642 985,590 988,565 991,544 996,502 999,484', 21], ['1097,650 1107,647', 3], ['1107,647 1115,635 1121,622 1128,599', 7], ['1195,730 1213,700 1233,675 1253,650 1275,629', 5], ['1317,650 1337,625 1365,599', 4], ['1378,597 1414,568', 3], ['1462,572 1475,563 1493,542', 3], ['1493,542 1505,517', 7], ['1587,570 1590,568 1592,558 1598,536 1606,506 1616,472 1622,453 1627,442', 11]]
  .forEach(([p, gap]) => dots(p, red, gap));

// Bands
const round = { 'stroke-linecap': 'round' };
box(LEFT, 704, END, 711, '#0000ff');
line('49,626 80,626 107,630 147,638 180,645 203,651 227,653 247,665 287,683 307,693 330,699 343,707 360,730 377,747 400,773 420,792 447,794 480,803 503,803 530,797 560,788 593,775 613,762 640,753 680,748 733,743 760,739 787,739 800,743 857,752 890,763 903,771 933,781 967,794 990,795 1000,793 1020,794 1040,797 1063,802 1097,802 1130,803 1160,806 1187,811 1227,811 1240,809 1280,812 1313,817 1357,816 1393,819 1430,820 1467,820 1500,819 1527,814 1553,810 1583,802 1607,793 1620,783 1627,773 1638,762 1647,759 1660,747 1690,717 1697,714 1717,713 1737,709 1757,704 1787,703 1830,700 1853,703', '#00ff00', 5, round);
line('1080,70 1090,84 1107,97 1120,106 1137,112 1153,123 1177,137 1193,145 1210,158 1227,172 1243,188 1257,196 1270,201 1288,212 1318,216 1330,222 1350,230 1367,233 1437,236 1493,237 1527,234 1587,234 1613,229 1633,236 1650,237 1687,248 1717,249 1760,247 1783,246 1803,255 1820,262 1843,267 1853,267', '#00ff00', 5, round);
line('49,664 67,667 87,672 107,679 127,686 143,693 170,693 190,692 213,696 233,700 253,706 287,711 307,716 340,722 360,737 380,743 393,750 417,765 447,770 477,778 503,780 530,776 593,772 613,768 650,766 687,757 720,749 747,741 780,734 807,733 863,735 893,741 933,745 967,753 1000,756 1040,760 1080,768 1103,773 1130,776 1157,779 1193,788 1233,795 1273,802 1313,807 1330,801 1347,792 1363,786 1403,781 1423,773 1447,769 1480,762 1520,758 1570,754 1593,753 1660,754 1737,753 1793,755 1853,757', '#ff00ff', 5, round);
line('1503,74 1527,85 1553,97 1583,109 1600,112 1627,113 1660,117 1707,122 1733,128 1760,131 1793,133 1853,134', '#ff00ff', 7, round);

// Reference levels and crosshair
box(LEFT, 111, 1862, 113, '#808080');
box(LEFT, 1012, 1862, 1014, '#808080');
box(LEFT, 120, 1862, 121, '#ff0000');
box(LEFT, 995, 1862, 996, '#0000ff');
box(LEFT, 250, 1862, 257, '#00ff00');
box(LEFT, 490, 1862, 493, '#993300');
box(LEFT, 655, 1862, 656, '#ff0000');
box(1661, TOP, 1662, BOTTOM, '#ff0000');
box(1862, TOP, 1865, 491, '#e61400');
box(1862, 491, 1865, BOTTOM, '#1464d2');
```
